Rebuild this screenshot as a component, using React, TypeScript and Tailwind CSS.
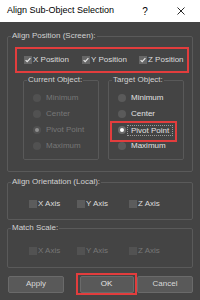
import React from 'react';

const RED = 'border-[#e23d3d]';

function Check({ checked = false, disabled = false }: { checked?: boolean; disabled?: boolean }) {
  return (
    <span
      className={`flex h-[8px] w-[8px] shrink-0 items-center justify-center ${
        disabled ? 'bg-[#525252]' : checked ? 'bg-[#676767]' : 'bg-[#5c5c5c]'
      }`}
    >
      {checked && (
        <svg viewBox="0 0 8 8" width="8" height="8">
          <path d="M1.6 4.1 L3.2 5.7 L6.4 2.2" stroke="#e6e6e6" strokeWidth="1.2" fill="none" />
        </svg>
      )}
    </span>
  );
}

function CheckItem({ label, checked, disabled, className }: { label: string; checked?: boolean; disabled?: boolean; className?: string }) {
  return (
    <div className={`flex items-center gap-[1px] ${className ?? ''}`}>
      <Check checked={checked} disabled={disabled} />
      <span className={disabled ? 'text-[#777]' : 'text-[#dcdcdc]'}>{label}</span>
    </div>
  );
}

function Radio({ label, selected, disabled, focused, marked }: { label: string; selected?: boolean; disabled?: boolean; focused?: boolean; marked?: boolean }) {
  return (
    <div className={`relative flex h-4 items-center pl-[9px] ${focused ? 'gap-[1px]' : 'gap-[5px]'}`}>
      <span
        className={`flex h-[8px] w-[8px] items-center justify-center rounded-full ${
          disabled ? 'bg-[#515151]' : selected ? 'bg-[#6c6c6c]' : 'bg-[#5a5a5a]'
        }`}
      >
        {selected && <span className={`h-[4px] w-[4px] rounded-full ${disabled ? 'bg-[#8e8e8e]' : 'bg-white'}`} />}
      </span>
      <span
        className={`${disabled ? 'text-[#777]' : 'text-[#e2e2e2]'} ${
          focused ? 'border border-dotted border-[#9a9a9a] px-[3px] leading-[9px]' : ''
        }`}
      >
        {label}
      </span>
      {marked && <div className={`pointer-events-none absolute left-[1px] top-[-1px] h-[21px] w-[67px] border-2 ${RED}`} />}
    </div>
  );
}

function SubGroup({ title, disabled }: { title: string; disabled?: boolean }) {
  return (
    <fieldset className="w-[76px] rounded-[2px] border border-[#595959]">
      <legend className="ml-[3px] px-[1px] leading-[12px] text-[#d2d2d2]">{title}</legend>
      <div className="pb-[5px] pt-[4px]">
        <Radio label="Minimum" disabled={disabled} />
        <Radio label="Center" disabled={disabled} />
        <Radio label="Pivot Point" selected disabled={disabled} focused={!disabled} marked={!disabled} />
        <Radio label="Maximum" disabled={disabled} />
      </div>
    </fieldset>
  );
}

function AxisRow({ disabled }: { disabled?: boolean }) {
  return (
    <div className="flex h-3 items-center pl-[21px]">
      <CheckItem label="X Axis" disabled={disabled} className="w-[48px]" />
      <CheckItem label="Y Axis" disabled={disabled} className="w-[52px]" />
      <CheckItem label="Z Axis" disabled={disabled} />
    </div>
  );
}

export default function App() {
  return (
    <div className="flex h-[300px] w-[200px] flex-col overflow-hidden bg-[#444444] font-['Liberation_Sans',Arial,sans-serif] text-[8px]">
      {/* title bar */}
      <div className="flex h-[22px] shrink-0 items-center bg-white text-[9px] text-black">
        <span className="flex-1 pl-[7px]">Align Sub-Object Selection</span>
        <span className="flex w-[36px] justify-center text-[10px]">?</span>
        <span className="mr-[1px] flex w-[36px] justify-center">
          <svg viewBox="0 0 8 8" width="8" height="8">
            <path d="M0.5 0.5 L7.5 7.5 M7.5 0.5 L0.5 7.5" stroke="#111" strokeWidth="0.9" />
          </svg>
        </span>
      </div>

      <div className="flex flex-col px-[7px] pt-[8px]">
        <fieldset className="rounded-[2px] border border-[#5a5a5a]">
          <legend className="ml-[3px] px-[1px] leading-[12px] text-[#d2d2d2]">Align Position (Screen):</legend>
          <div className="pb-[11px] pt-[5px]">
            <div className={`ml-[7px] flex h-[26px] w-[174px] items-center border-2 pl-[7px] ${RED}`}>
              <CheckItem label="X Position" checked className="w-[58px]" />
              <CheckItem label="Y Position" checked className="w-[57px]" />
              <CheckItem label="Z Position" checked />
            </div>
            <div className="mt-[1px] flex gap-[9px] pl-[15px]">
              <SubGroup title="Current Object:" disabled />
              <SubGroup title="Target Object:" />
            </div>
          </div>
        </fieldset>

        <fieldset className="mt-[4px] rounded-[2px] border border-[#5a5a5a]">
          <legend className="ml-[3px] px-[1px] leading-[12px] text-[#d2d2d2]">Align Orientation (Local):</legend>
          <div className="pb-[9px] pt-[10px]">
            <AxisRow />
          </div>
        </fieldset>

        <fieldset className="mt-[2px] rounded-[2px] border border-[#5a5a5a]">
          <legend className="ml-[3px] px-[1px] leading-[12px] text-[#d2d2d2]">Match Scale:</legend>
          <div className="pb-[10px] pt-[11px]">
            <AxisRow disabled />
          </div>
        </fieldset>

        <div className="mt-[5px] flex items-center">
          <button className="ml-[1px] h-[17px] w-[56px] rounded-[2px] border border-[#6a6a6a] bg-[#595959] text-[#d8d8d8]">Apply</button>
          <div className={`ml-[12px] flex h-[22px] w-[61px] items-center justify-center border-2 ${RED}`}>
            <button className="h-[17px] w-[54px] rounded-[2px] border border-[#6a6a6a] bg-[#595959] text-[#e6e6e6]">OK</button>
          </div>
          <button className="h-[17px] w-[56px] rounded-[2px] border border-[#6a6a6a] bg-[#595959] text-[#d8d8d8]">Cancel</button>
        </div>
      </div>
    </div>
  );
}
